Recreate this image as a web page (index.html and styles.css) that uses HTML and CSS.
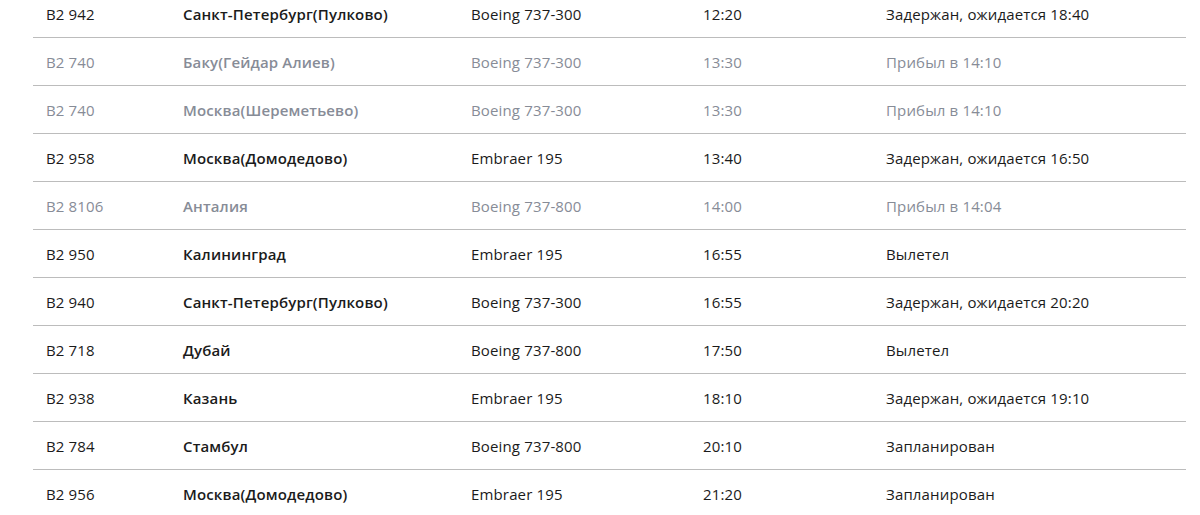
FILE: index.html
```html
<!DOCTYPE html>
<html lang="ru">
<head>
<meta charset="utf-8">
<link rel="stylesheet" href="styles.css">
</head>
<body>
<div class="board">
  <div class="row"><div class="c num">B2 942</div><div class="c city">Санкт-Петербург(Пулково)</div><div class="c plane">Boeing 737-300</div><div class="c time">12:20</div><div class="c status">Задержан, ожидается 18:40</div></div>
  <div class="row done"><div class="c num">B2 740</div><div class="c city">Баку(Гейдар Алиев)</div><div class="c plane">Boeing 737-300</div><div class="c time">13:30</div><div class="c status">Прибыл в 14:10</div></div>
  <div class="row done"><div class="c num">B2 740</div><div class="c city">Москва(Шереметьево)</div><div class="c plane">Boeing 737-300</div><div class="c time">13:30</div><div class="c status">Прибыл в 14:10</div></div>
  <div class="row"><div class="c num">B2 958</div><div class="c city">Москва(Домодедово)</div><div class="c plane">Embraer 195</div><div class="c time">13:40</div><div class="c status">Задержан, ожидается 16:50</div></div>
  <div class="row done"><div class="c num">B2 8106</div><div class="c city">Анталия</div><div class="c plane">Boeing 737-800</div><div class="c time">14:00</div><div class="c status">Прибыл в 14:04</div></div>
  <div class="row"><div class="c num">B2 950</div><div class="c city">Калининград</div><div class="c plane">Embraer 195</div><div class="c time">16:55</div><div class="c status">Вылетел</div></div>
  <div class="row"><div class="c num">B2 940</div><div class="c city">Санкт-Петербург(Пулково)</div><div class="c plane">Boeing 737-300</div><div class="c time">16:55</div><div class="c status">Задержан, ожидается 20:20</div></div>
  <div class="row"><div class="c num">B2 718</div><div class="c city">Дубай</div><div class="c plane">Boeing 737-800</div><div class="c time">17:50</div><div class="c status">Вылетел</div></div>
  <div class="row"><div class="c num">B2 938</div><div class="c city">Казань</div><div class="c plane">Embraer 195</div><div class="c time">18:10</div><div class="c status">Задержан, ожидается 19:10</div></div>
  <div class="row"><div class="c num">B2 784</div><div class="c city">Стамбул</div><div class="c plane">Boeing 737-800</div><div class="c time">20:10</div><div class="c status">Запланирован</div></div>
  <div class="row"><div class="c num">B2 956</div><div class="c city">Москва(Домодедово)</div><div class="c plane">Embraer 195</div><div class="c time">21:20</div><div class="c status">Запланирован</div></div>
</div>
</body>
</html>
```
FILE: styles.css
```css
html, body {
  margin: 0;
  padding: 0;
  background: #fff;
}
body {
  font-family: "Open Sans", "Noto Sans", sans-serif;
  font-size: 15px;
  letter-spacing: 0.15px;
  color: #1b1b1b;
}
.board {
  margin: -10px 14px 0 33px;
  width: 1153px;
}
.row {
  display: grid;
  grid-template-columns: 137px 288px 232px 183px 313px;
  height: 47px;
  align-items: center;
  border-bottom: 1px solid #bcbcbc;
}
.c {
  padding-left: 13px;
  white-space: nowrap;
}
.city {
  font-weight: 600;
}
.row.done {
  color: #878c97;
}
```
